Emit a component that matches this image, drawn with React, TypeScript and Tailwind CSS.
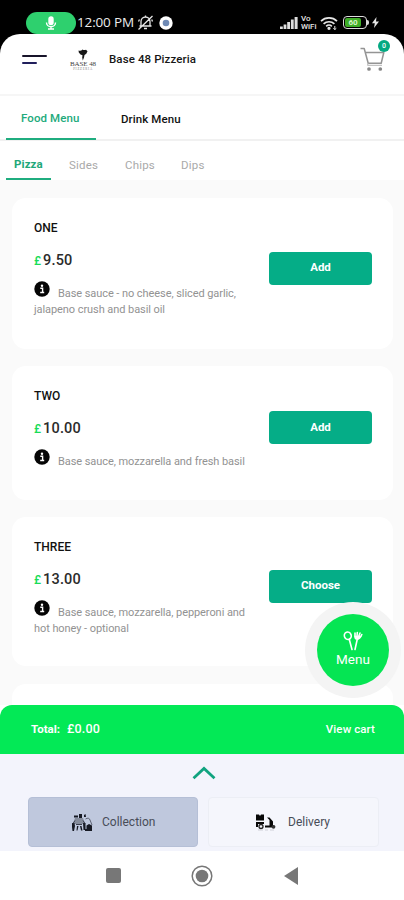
import React from "react";

type Item = {
  name: string;
  price: string;
  lines: string[];
  action: string;
  size: string;
};

const items: Item[] = [
  {
    name: "ONE",
    price: "9.50",
    lines: ["Base sauce - no cheese, sliced garlic,", "jalapeno crush and basil oil"],
    action: "Add",
    size: "h-[151px] mb-[17px]",
  },
  {
    name: "TWO",
    price: "10.00",
    lines: ["Base sauce, mozzarella and fresh basil"],
    action: "Add",
    size: "h-[134px] mb-[17px]",
  },
  {
    name: "THREE",
    price: "13.00",
    lines: ["Base sauce, mozzarella, pepperoni and", "hot honey - optional"],
    action: "Choose",
    size: "h-[149px] mb-[18px]",
  },
];

function StatusBar() {
  return (
    <div className="flex h-[34px] shrink-0 items-end bg-black pl-[26px] text-white">
      <div className="flex h-[22px] w-[50px] shrink-0 items-center justify-center rounded-full bg-[#2ed06e]">
        <svg width="12" height="14" viewBox="0 0 12 14" fill="none" stroke="white" strokeWidth="1.4">
          <rect x="4" y="1" width="4" height="7.5" rx="2" fill="white" />
          <path d="M1.5 6.5a4.5 4.2 0 0 0 9 0M6 10.500v2.500M3 13h6" />
        </svg>
      </div>
      <div className="ml-[1px] flex h-[22px] w-[58px] shrink-0 items-center font-['Open_Sans','Noto_Sans',sans-serif] text-[13.5px] leading-none font-medium tracking-[-0.15px] whitespace-nowrap text-[#ececec]">
        12:00 PM
      </div>
      <svg className="ml-[2px] mb-[3px] shrink-0" width="17" height="17" viewBox="0 0 17 17" fill="none" stroke="#e6e6e6" strokeWidth="1.3">
        <path d="M4 11.500V7.500a4.500 4.500 0 0 1 9 0V11.500M2.500 12h12M7 14.500h3M8.500 1.500v2M1.500 15.500L15.500 2M1.500 7.500l1-2M15.500 7.500l-.8-2" />
      </svg>
      <svg className="ml-[5px] mb-[4px] shrink-0" width="14" height="14" viewBox="0 0 14 14">
        <circle cx="7" cy="7" r="6.700" fill="white" />
        <circle cx="7" cy="7" r="3.300" fill="#6f8ab5" />
      </svg>
      <svg className="ml-[107px] mb-[5px] shrink-0" width="18" height="12" viewBox="0 0 18 12" fill="#dedede">
        <rect x="0" y="9.500" width="2.800" height="2.500" />
        <rect x="3.600" y="7.500" width="2.800" height="4.500" />
        <rect x="7.200" y="5" width="2.800" height="7" />
        <rect x="10.900" y="2.500" width="2.800" height="9.500" />
        <rect x="14.600" y="0" width="3" height="12" />
      </svg>
      <div className="mb-[3px] ml-[3px] w-[17px] shrink-0 font-[Roboto,sans-serif] text-[8px] leading-[8px] font-medium text-[#e6e6e6]">
        <div>Vo</div>
        <div>WiFi</div>
      </div>
      <svg className="ml-[2px] mb-[4px] shrink-0" width="18" height="14" viewBox="0 0 18 14" fill="none" stroke="#e6e6e6" strokeWidth="1.700">
        <path d="M1 5.200a11.500 11.500 0 0 1 16 0M3.600 7.900a7.800 7.800 0 0 1 10.800 0M6.200 10.300a4 4 0 0 1 5.600 0" />
        <circle cx="9" cy="12.300" r=".8" fill="#e6e6e6" />
        <path d="M14.800 10v3.500M13.300 12.300l1.500 1.300 1.500-1.300" strokeWidth="1" />
      </svg>
      <div className="mb-[5px] ml-[5px] flex shrink-0 items-center">
        <div className="flex h-[13px] w-[24px] rounded-[4px] border-[1.5px] border-[#dcdcdc] p-[1px]">
          <div className="flex w-[16px] items-center justify-center rounded-[2px] bg-[#3fae27] font-[Roboto,sans-serif] text-[8px] leading-none font-bold text-[#d8f5c8]">
            60
          </div>
        </div>
        <div className="h-[5px] w-[2px] rounded-r bg-[#dcdcdc]" />
      </div>
      <svg className="ml-[3px] mb-[6px] shrink-0" width="7" height="11" viewBox="0 0 7 11" fill="#e6e6e6">
        <path d="M4.500 0L0 6.200h2.800L2 11l5-6.500H4z" />
      </svg>
    </div>
  );
}

function Header() {
  return (
    <div className="h-[60px] shrink-0 bg-black">
      <div className="flex h-full items-start rounded-t-[20px] bg-white">
        <div className="mt-[21px] ml-[22px] flex w-[25px] flex-col gap-[5px]">
          <div className="h-[2px] w-[25px] rounded bg-[#18142a]" />
          <div className="h-[2px] w-[15px] rounded bg-[#211f5c]" />
        </div>
        <div className="mt-[15px] ml-[22px] flex w-[28px] flex-col items-center">
          <svg width="10" height="12" viewBox="0 0 10 12" fill="#171717">
            <path d="M.5 1.500Q3 2.300 4.500.5 6 1.600 8 .7L9.500 2.200 8.300 4.800 6.500 6 6 8.500 4.800 11.500 4.200 8.500 4.500 6.200 2.500 5.500.8 3.500z" />
          </svg>
          <div className="font-['Liberation_Serif',serif] text-[7px] leading-[7px] tracking-[-0.1px] whitespace-nowrap text-[#444444]">
            BASE 48
          </div>
          <div className="font-['Liberation_Serif',serif] text-[3px] leading-[3px] tracking-[0.8px] text-[#777777]">
            PIZZERIA
          </div>
        </div>
        <div className="mt-[17px] ml-[12px] text-[11.5px] leading-[16px] font-medium tracking-[0.1px] whitespace-nowrap text-[#161616]">
          Base 48 Pizzeria
        </div>
        <div className="relative mt-[13px] ml-auto mr-[18px] w-[26px]">
          <svg width="26" height="25" viewBox="0 0 26 25" fill="none" stroke="#949494" strokeWidth="1.500" strokeLinejoin="round">
            <path d="M.5 1.500h3.700l4 14.800h13l2.600-10.800H5.500" />
            <path d="M8.200 16.300l-.7 2h14.500" strokeWidth="1" stroke="#b5b5b5" />
            <circle cx="9" cy="22" r="1.100" fill="#777" stroke="#888" />
            <circle cx="20.300" cy="22" r="1.100" fill="#777" stroke="#888" />
          </svg>
          <div className="absolute -top-[7px] left-[18px] flex size-[12px] items-center justify-center rounded-full bg-[#04a982] text-[7px] leading-none font-medium text-white">
            0
          </div>
        </div>
      </div>
    </div>
  );
}

function Tabs() {
  return (
    <>
      <div className="flex h-[47px] shrink-0 border-t-2 border-b-2 border-t-[#f6f6f6] border-b-[#f1f1f1] pl-[6px] text-[11.5px] leading-[16px] font-medium whitespace-nowrap">
        <div className="-mb-px h-[44px] w-[90px] border-b-2 border-[#1fad7f] pt-[14px] pl-[15px] tracking-[0.1px] text-[#22aa7c]">
          Food Menu
        </div>
        <div className="pt-[15px] pl-[25px] tracking-[0.1px] text-[#111111]">Drink Menu</div>
      </div>
      <div className="flex h-[39px] shrink-0 pl-[6px] text-[11.5px] leading-[16px] tracking-[0.2px] whitespace-nowrap text-[#a9a9a9]">
        <div className="w-[45px] border-b-2 border-[#1fad7f] pt-[15px] pl-[8px] font-bold tracking-[0.1px] text-[#1fa87a]">
          Pizza
        </div>
        <div className="w-[56px] pt-[16px] pl-[18px]">Sides</div>
        <div className="w-[56px] pt-[16px] pl-[18px]">Chips</div>
        <div className="pt-[16px] pl-[18px]">Dips</div>
      </div>
    </>
  );
}

function InfoIcon() {
  return (
    <svg className="mr-[8px] shrink-0" width="16" height="16" viewBox="0 0 16 16">
      <circle cx="8" cy="8" r="7.700" fill="#050505" />
      <circle cx="8" cy="4.700" r="1.200" fill="white" />
      <path d="M6.300 7.200h2.300v4.300M6.200 11.500h4" stroke="white" strokeWidth="1.400" fill="none" />
    </svg>
  );
}

function Card({ item }: { item: Item }) {
  return (
    <div className={`flex shrink-0 items-center rounded-[14px] bg-white pr-[21px] pl-[22px] ${item.size}`}>
      <div className="flex h-full w-[235px] flex-col whitespace-nowrap">
        <div className="mt-[21px] text-[12px] leading-[18px] font-medium text-[#111111]">{item.name}</div>
        <div className="mt-[14px] flex items-baseline leading-[20px]">
          <span className="w-[9px] text-[12px] font-medium text-[#19dc58]">£</span>
          <span className="text-[14.5px] font-medium tracking-[0.2px] text-[#2b2b2b]">{item.price}</span>
        </div>
        <div className="mt-[10px] flex h-[21px] items-start text-[11px] leading-[17px] tracking-[-0.07px] text-[#929292]">
          <InfoIcon />
          <span className="pt-[4px]">{item.lines[0]}</span>
        </div>
        <div className="-mt-px text-[11px] leading-[17px] tracking-[-0.07px] text-[#929292]">{item.lines[1]}</div>
      </div>
      <button className="mb-[11px] h-[33px] w-[103px] rounded-[4px] bg-[#05ad87] text-[11.5px] font-bold text-white">
        {item.action}
      </button>
    </div>
  );
}

function CollectionIcon() {
  return (
    <svg width="22" height="19" viewBox="0 0 22 19" fill="#171a24">
      <path d="M3 2.500h4v2H3zM8 1h3v4H8zM13 2l1.500-1 .5 3h-2z" />
      <path d="M4 5h8l2 6H2z" fill="#858c9b" />
      <path d="M1 10h2.500l.5 3-1 5H1.500l-.5-4zM12 10h2.500v7H12.500zM6 13h1.500l-1 4.500H5.500zM9 13h1.500l1 4.500H10z" />
      <path d="M4 7.500l-2 3M12 7.500l2 3M5 11.500h6" stroke="#3a3f4e" />
      <path d="M14.500 6q3.500-2 4.500 1l2 5" stroke="#5d6373" fill="none" />
      <path d="M15.500 12.500l2.500-1.500 3 1.500v5.500h-5.500zM14 16h3v2h-3z" />
    </svg>
  );
}

function DeliveryIcon() {
  return (
    <svg width="21" height="17" viewBox="0 0 21 17" fill="#080808">
      <path d="M0 .5h3l1 1.500 1-1.500h3v6H0zM0 8h8v2H0zM0 10h2v3H0zM11 3.500h2.500l3.500 4v4l2 .5v1.500H9v-2h4.500V6z" />
      <circle cx="5" cy="12.500" r="2" fill="#f4f5fc" stroke="#222222" strokeWidth="1.300" />
      <circle cx="17.500" cy="12.800" r="1.900" fill="#333333" />
      <path d="M2 16h5M9 16h3M14 16h4" stroke="#d0d0d8" strokeWidth="1" />
    </svg>
  );
}

function MenuFab() {
  return (
    <div className="absolute top-[602px] left-[305px] flex size-[96px] items-center justify-center rounded-full bg-[#f4f4f4]">
      <div className="flex size-[72px] flex-col items-center rounded-full bg-[#05e553] text-white">
        <svg className="mt-[17px]" width="20" height="20" viewBox="0 0 20 20" fill="none" stroke="white" strokeWidth="1.600" strokeLinecap="round">
          <ellipse cx="4.800" cy="4.800" rx="3.400" ry="3.700" transform="rotate(-20 4.800 4.800)" />
          <path d="M6.300 8.500L9 18.500" />
          <path d="M12 2v3.500q0 2.500 2.300 2.700Q17 8 18.800 3.500M14.300 1.500l-.3 4M17 2l-1.500 4M14.200 8.500L12 18.500" />
          <path d="M12.500 5.500h4.500l-2.500 2.500z" fill="white" />
        </svg>
        <div className="text-[13.5px] leading-[17px]">Menu</div>
      </div>
    </div>
  );
}

export default function App() {
  return (
    <div className="relative flex h-[900px] w-[404px] flex-col overflow-hidden bg-white font-[Roboto,sans-serif]">
      <StatusBar />
      <Header />
      <Tabs />
      <div className="flex h-[525px] shrink-0 flex-col overflow-hidden bg-[#fafafa] pt-[18px] pr-[11px] pl-[12px]">
        {items.map((item) => (
          <Card key={item.name} item={item} />
        ))}
        <div className="h-[60px] shrink-0 rounded-t-[14px] bg-white" />
      </div>
      <div className="flex h-[49px] shrink-0 bg-white">
        <div className="flex w-full items-center justify-between rounded-t-[12px] bg-[#03e956] pr-[29px] pl-[31px] whitespace-nowrap text-white">
          <div className="flex items-baseline">
            <span className="w-[36px] text-[11.5px] font-bold">Total:</span>
            <span className="text-[12.5px] font-medium tracking-[0.2px]">£0.00</span>
          </div>
          <span className="text-[11.5px] font-medium tracking-[0.1px]">View cart</span>
        </div>
      </div>
      <div className="flex h-[97px] shrink-0 flex-col items-center bg-[#f3f4fc]">
        <svg className="mt-[12px] ml-[3px]" width="24" height="14" viewBox="0 0 24 14" fill="none" stroke="#10a37f" strokeWidth="2.800">
          <path d="M1.500 12.200L12 2.500l10.500 9.700" />
        </svg>
        <div className="mt-[17px] flex w-full gap-[10px] pr-[25px] pl-[28px] text-[12px] whitespace-nowrap text-[#484d58]">
          <div className="flex h-[50px] w-[170px] items-center rounded-[4px] border border-[#b5bfd6] bg-[#bfc8dd] pl-[42px]">
            <CollectionIcon />
            <span className="ml-[9px]">Collection</span>
          </div>
          <div className="flex h-[50px] w-[171px] items-center rounded-[4px] border border-[#eceef5] bg-[#f5f6fc] pl-[47px]">
            <DeliveryIcon />
            <span className="ml-[11px]">Delivery</span>
          </div>
        </div>
      </div>
      <div className="flex h-[49px] shrink-0 items-center bg-white pl-[106px]">
        <div className="size-[15px] rounded-[2px] bg-[#777777]" />
        <svg className="ml-[70px]" width="22" height="22" viewBox="0 0 22 22">
          <circle cx="11" cy="11" r="9.800" fill="none" stroke="#777777" strokeWidth="1.500" />
          <circle cx="11" cy="11" r="6.300" fill="#777777" />
        </svg>
        <svg className="ml-[71px]" width="14" height="18" viewBox="0 0 14 18" fill="#777777">
          <path d="M14 0v18L0 9z" />
        </svg>
      </div>
      <MenuFab />
    </div>
  );
}
